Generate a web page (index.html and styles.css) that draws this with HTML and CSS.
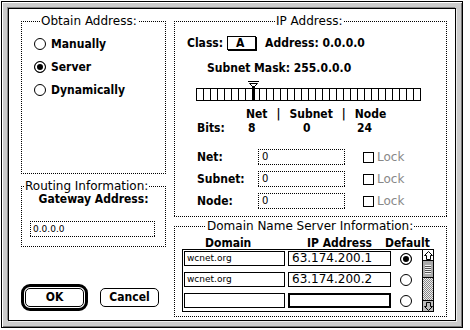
FILE: index.html
```html
<!DOCTYPE html>
<html lang="en">
<head>
  <meta charset="UTF-8" />
  <title>MacTCP Configuration</title>
  <link rel="stylesheet" href="styles.css">
</head>
<body>
  <div class="dialog">
    <div class="content">
      <div class="col-left">
        <div class="group obtain">
          <div class="group-title">Obtain Address:</div>
          <div class="radio-list">
            <div class="radio-row"><span class="radio"></span>Manually</div>
            <div class="radio-row"><span class="radio on"></span>Server</div>
            <div class="radio-row"><span class="radio"></span>Dynamically</div>
          </div>
        </div>

        <div class="group routing">
          <div class="group-title">Routing Information:</div>
          <div class="gateway-label">Gateway Address:</div>
          <div class="field gateway-field">0.0.0.0</div>
        </div>

        <div class="buttons">
          <div class="default-ring"><button class="btn">OK</button></div>
          <button class="btn">Cancel</button>
        </div>
      </div>

      <div class="col-right">
        <div class="group ip">
          <div class="group-title">IP Address:</div>
          <div class="class-row">
            <span>Class:</span>
            <span class="class-box">A</span>
            <span class="address">Address: 0.0.0.0</span>
          </div>
          <div class="mask-row">Subnet Mask: 255.0.0.0</div>
          <div class="slider">
            <svg class="pointer" width="11" height="20" viewBox="0 0 11 20">
              <path d="M0 0.5H11M1.5 2.5H9.5L5.5 6.5Z" fill="none" stroke="#000" stroke-width="1"/>
              <rect x="4" y="5" width="3" height="15" fill="#000"/>
            </svg>
          </div>
          <div class="split-row">
            <span>Net</span><span>|</span><span>Subnet</span><span>|</span><span>Node</span>
          </div>
          <div class="bits-row">
            <span class="bits-label">Bits:</span>
            <span class="bits-net">8</span>
            <span class="bits-subnet">0</span>
            <span>24</span>
          </div>
          <div class="part-rows">
            <div class="part-row">
              <span class="part-label">Net:</span>
              <div class="field part-field">0</div>
              <span class="check"></span><span class="lock">Lock</span>
            </div>
            <div class="part-row">
              <span class="part-label">Subnet:</span>
              <div class="field part-field">0</div>
              <span class="check"></span><span class="lock">Lock</span>
            </div>
            <div class="part-row">
              <span class="part-label">Node:</span>
              <div class="field part-field">0</div>
              <span class="check"></span><span class="lock">Lock</span>
            </div>
          </div>
        </div>

        <div class="group dns">
          <div class="group-title">Domain Name Server Information:</div>
          <div class="dns-head">
            <span class="head-domain">Domain</span>
            <span class="head-ip">IP Address</span>
            <span>Default</span>
          </div>
          <div class="dns-list">
            <div class="dns-rows">
              <div class="dns-row">
                <div class="domain-field">wcnet.org</div>
                <div class="ip-field">63.174.200.1</div>
                <span class="radio on"></span>
              </div>
              <div class="dns-row">
                <div class="domain-field">wcnet.org</div>
                <div class="ip-field">63.174.200.2</div>
                <span class="radio"></span>
              </div>
              <div class="dns-row">
                <div class="domain-field"></div>
                <div class="ip-field active"></div>
                <span class="radio"></span>
              </div>
            </div>
            <div class="scrollbar">
              <div class="sb-arrow sb-up">
                <svg width="9" height="9" viewBox="0 0 9 9"><path d="M4.5 0.5L8.5 4.5H6.5V8.5H2.5V4.5H0.5Z" fill="none" stroke="#000"/></svg>
              </div>
              <div class="sb-thumb"><div class="ridges"></div></div>
              <div class="sb-track"></div>
              <div class="sb-arrow sb-down">
                <svg width="9" height="9" viewBox="0 0 9 9"><path d="M4.5 8.5L8.5 4.5H6.5V0.5H2.5V4.5H0.5Z" fill="none" stroke="#000"/></svg>
              </div>
            </div>
          </div>
        </div>
      </div>
    </div>
  </div>
</body>
</html>
```

FILE: styles.css
```css
body {
  margin: 0;
  background: #fff;
  color: #000;
  font-family: "DejaVu Sans Condensed", "DejaVu Sans", sans-serif;
  font-weight: bold;
  font-size: 12px;
}

.dialog {
  box-sizing: border-box;
  width: 462px;
  height: 327px;
  margin: 1px 0 0 1px;
  border: 1px solid #000;
  padding: 6px;
  background: #ccc;
  box-shadow: inset 1px 1px 0 #fff, inset -1px -1px 0 #777;
}

.content {
  box-sizing: border-box;
  height: 100%;
  border: 1px solid #000;
  background: #fff;
  box-shadow: -1px -1px 0 #888, 1px 1px 0 #eee;
  display: flex;
  gap: 8px;
  padding: 12px 0 0 12px;
}

.col-left {
  width: 145px;
}

.col-right {
  width: 273px;
}

/* dotted frames drawn pixel by pixel (1px on, 1px off) */
.group,
.field {
  box-sizing: border-box;
  border: 1px solid transparent;
  background:
    linear-gradient(90deg, #000 50%, transparent 50%) left top / 2px 1px repeat-x,
    linear-gradient(90deg, #000 50%, transparent 50%) left bottom / 2px 1px repeat-x,
    linear-gradient(#000 50%, transparent 50%) left top / 1px 2px repeat-y,
    linear-gradient(#000 50%, transparent 50%) right top / 1px 2px repeat-y,
    #fff;
  background-origin: border-box;
}

.group-title {
  width: fit-content;
  margin-top: -8px;
  padding: 0 1px;
  background: #fff;
  font-family: "DejaVu Sans", sans-serif;
  font-weight: normal;
  line-height: 14px;
}

.obtain {
  height: 153px;
}

.obtain .group-title {
  margin-left: 18px;
}

.radio-list {
  padding-top: 4px;
}

.radio-row {
  display: flex;
  align-items: center;
  gap: 5px;
  height: 23px;
  padding-left: 12px;
}

.radio {
  box-sizing: border-box;
  width: 12px;
  height: 12px;
  border: 1px solid #000;
  border-radius: 50%;
  background: #fff;
  flex-shrink: 0;
}

.radio.on {
  background: #000;
  box-shadow: inset 0 0 0 2px #fff;
}

.routing {
  height: 61px;
  margin-top: 12px;
}

.routing .group-title {
  margin-left: 2px;
}

.gateway-label {
  margin-top: 0;
  line-height: 12px;
  text-align: center;
}

.field {
  height: 16px;
  padding-left: 2px;
  font-family: "DejaVu Sans", sans-serif;
  font-weight: normal;
  font-size: 9px;
  line-height: 14px;
}

.gateway-field {
  width: 125px;
  margin: 16px 0 0 8px;
}

/* buttons */
.buttons {
  display: flex;
  align-items: center;
  gap: 12px;
  margin-top: 37px;
}

.default-ring {
  display: flex;
  border: 3px solid #000;
  border-radius: 9px;
  padding: 1px;
}

.btn {
  box-sizing: border-box;
  width: 59px;
  height: 19px;
  padding: 0;
  border: 1px solid #000;
  border-radius: 5px;
  background: #fff;
  color: #000;
  font: inherit;
  line-height: 17px;
}

/* IP address group */
.ip {
  height: 196px;
}

.ip .group-title {
  margin-left: 100px;
}

.class-row {
  display: flex;
  align-items: center;
  height: 16px;
  margin-top: 7px;
  padding-left: 12px;
}

.class-box {
  box-sizing: border-box;
  width: 29px;
  height: 14px;
  margin-left: 4px;
  border: 1px solid #000;
  box-shadow: 1px 1px 0 #000;
  padding-right: 3px;
  text-align: center;
  line-height: 12px;
}

.address {
  margin-left: 9px;
}

.mask-row {
  margin-top: 10px;
  padding-left: 32px;
  line-height: 14px;
}

.slider {
  position: relative;
  width: 225px;
  height: 13px;
  box-sizing: border-box;
  margin: 13px 0 0 21px;
  border-top: 1px solid #000;
  border-bottom: 1px solid #000;
  background: repeating-linear-gradient(90deg, #000 0 1px, #fff 1px 7px);
}

.pointer {
  position: absolute;
  left: 52px;
  top: -8px;
}

.split-row {
  display: flex;
  gap: 9px;
  margin-top: 7px;
  padding-left: 71px;
  line-height: 13px;
}

.bits-row {
  display: flex;
  padding-left: 22px;
  line-height: 14px;
}

.bits-label {
  width: 51px;
}

.bits-net {
  width: 55px;
}

.bits-subnet {
  width: 54px;
}

.part-rows {
  margin-top: 11px;
}

.part-row {
  display: flex;
  align-items: center;
  height: 22px;
  padding-left: 22px;
}

.part-label {
  width: 61px;
}

.part-field {
  width: 87px;
  padding-left: 3px;
  font-size: 10px;
}

.check {
  box-sizing: border-box;
  width: 11px;
  height: 11px;
  margin-left: 18px;
  border: 1px solid #000;
}

.lock {
  margin-left: 3px;
  font-family: "DejaVu Sans", sans-serif;
  font-weight: normal;
  color: #888;
}

/* DNS group */
.dns {
  height: 91px;
  margin-top: 9px;
}

.dns .group-title {
  margin-left: 31px;
}

.dns-head {
  display: flex;
  margin-top: 4px;
  padding-left: 30px;
  line-height: 12px;
}

.head-domain {
  width: 102px;
}

.head-ip {
  width: 78px;
}

.dns-list {
  box-sizing: border-box;
  display: flex;
  width: 252px;
  height: 63px;
  margin-left: 7px;
  border: 1px solid #000;
}

.dns-rows {
  display: flex;
  flex-direction: column;
  gap: 6px;
  padding: 1px 0 0 1px;
}

.dns-row {
  display: flex;
  align-items: center;
  height: 15px;
}

.domain-field,
.ip-field {
  box-sizing: border-box;
  height: 15px;
  border: 1px solid #000;
  font-family: "DejaVu Sans", sans-serif;
  font-weight: normal;
}

.domain-field {
  width: 101px;
  padding-left: 2px;
  font-size: 9px;
  line-height: 13px;
}

.ip-field {
  width: 103px;
  margin-left: 3px;
  padding-left: 3px;
  font-size: 12px;
  line-height: 12px;
}

.ip-field.active {
  border-width: 2px;
}

.dns-row .radio {
  margin-left: 9px;
}

.scrollbar {
  display: flex;
  flex-direction: column;
  width: 11px;
  margin-left: auto;
  border-left: 1px solid #000;
  box-sizing: border-box;
}

.sb-arrow {
  display: flex;
  align-items: center;
  justify-content: center;
  height: 11px;
  box-sizing: border-box;
}

.sb-up {
  border-bottom: 1px solid #000;
  background: #fff;
}

.sb-down {
  border-top: 1px solid #000;
  background: #bbb;
}

.sb-thumb {
  display: flex;
  align-items: center;
  justify-content: center;
  height: 17px;
  box-sizing: border-box;
  border-bottom: 1px solid #000;
  background: #aaa;
}

.ridges {
  width: 6px;
  height: 9px;
  background: repeating-linear-gradient(#eee 0 1px, #555 1px 2px);
}

.sb-track {
  flex: 1;
  background: repeating-conic-gradient(#888 0 25%, #eee 0 50%) 0 0 / 2px 2px;
}
```
